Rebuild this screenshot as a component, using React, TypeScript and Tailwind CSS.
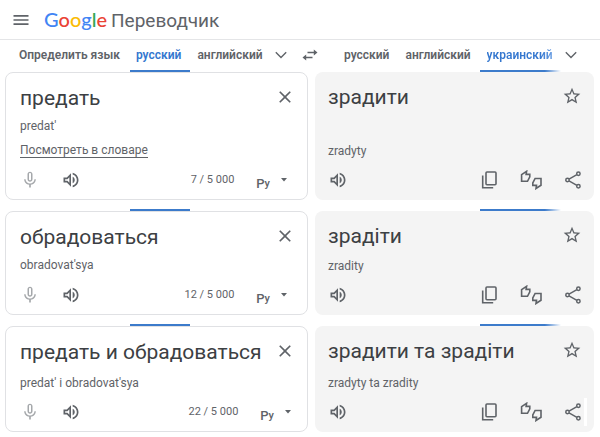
import { useState } from "react";

const PAIRS = [
  {
    source: "предать",
    sourceLatin: "predat'",
    target: "зрадити",
    targetLatin: "zradyty",
    count: 7,
    dictionary: true,
    height: "min-h-32",
  },
  {
    source: "обрадоваться",
    sourceLatin: "obradovat'sya",
    target: "зрадіти",
    targetLatin: "zradity",
    count: 12,
    height: "min-h-26",
  },
  {
    source: "предать и обрадоваться",
    sourceLatin: "predat' i obradovat'sya",
    target: "зрадити та зрадіти",
    targetLatin: "zradyty ta zradity",
    count: 22,
    scroll: true,
    height: "min-h-[106px]",
  },
];

type Pair = (typeof PAIRS)[number];

const ICONS = {
  menu: "M3 18h18v-2H3v2zm0-5h18v-2H3v2zm0-7v2h18V6H3z",
  close:
    "M19 6.41L17.59 5 12 10.59 6.41 5 5 6.41 10.59 12 5 17.59 6.41 19 12 13.41 17.59 19 19 17.59 13.41 12z",
  mic: "M12 14c1.66 0 3-1.34 3-3V5c0-1.66-1.34-3-3-3S9 3.34 9 5v6c0 1.66 1.34 3 3 3zm-1.200-9.100c0-.66.54-1.200 1.200-1.200s1.200.54 1.200 1.200v6.200c0 .66-.53 1.200-1.200 1.200s-1.200-.54-1.200-1.200V4.900zM17.300 11c0 3-2.540 5.100-5.300 5.100S6.700 14 6.700 11H5c0 3.410 2.720 6.230 6 6.720V21h2v-3.280c3.280-.49 6-3.310 6-6.720h-1.700z",
  volume:
    "M3 9v6h4l5 5V4L7 9H3zm7-.17v6.340L7.830 13H5v-2h2.830L10 8.830zM16.500 12c0-1.770-1.020-3.290-2.500-4.030v8.050c1.480-.73 2.500-2.250 2.500-4.020zM14 3.230v2.060c2.890.86 5 3.540 5 6.710s-2.110 5.850-5 6.710v2.060c4.010-.91 7-4.490 7-8.770s-2.990-7.860-7-8.770z",
  star: "M22 9.240l-7.190-.62L12 2 9.190 8.630 2 9.240l5.460 4.730L5.820 21 12 17.270 18.180 21l-1.630-7.030L22 9.240zM12 15.400l-3.760 2.270 1-4.280-3.320-2.880 4.380-.38L12 6.100l1.710 4.040 4.380.38-3.320 2.880 1 4.280L12 15.400z",
};

function Icon({ name, className = "size-5" }: { name: keyof typeof ICONS; className?: string }) {
  return (
    <svg viewBox="0 0 24 24" fill="currentColor" className={className} aria-hidden="true">
      <path d={ICONS[name]} />
    </svg>
  );
}

function CopyIcon() {
  return (
    <svg viewBox="0 0 20 20" fill="none" stroke="currentColor" strokeWidth="1.600" className="size-5" aria-hidden="true">
      <rect x="7" y="2" width="10" height="12.800" rx="1" />
      <path d="M3.700 5.500v12.300h10.500" />
    </svg>
  );
}

function RateIcon() {
  const thumb = "M2.600 4.600v6.700h5.900l2.300-4.500V4.400H7.100l.5-3.100z";
  return (
    <svg viewBox="0 0 24 20" fill="none" stroke="currentColor" strokeWidth="1.600" className="h-5 w-6" aria-hidden="true">
      <path d={thumb} />
      <path d={thumb} transform="rotate(180 12.300 9.900)" />
    </svg>
  );
}

function ShareIcon() {
  return (
    <svg viewBox="0 0 20 20" fill="none" stroke="currentColor" strokeWidth="1.500" className="size-5" aria-hidden="true">
      <circle cx="4.500" cy="10" r="1.700" />
      <circle cx="15.400" cy="3.800" r="1.700" />
      <circle cx="15.400" cy="16.200" r="1.700" />
      <path d="M6 9.100l7.900-4.400M6 10.900l7.900 4.400" />
    </svg>
  );
}

function Chevron() {
  return (
    <svg viewBox="0 0 12 8" fill="none" stroke="currentColor" strokeWidth="1.400" className="h-2 w-3" aria-hidden="true">
      <path d="M.8 1.300L6 6.500l5.200-5.200" />
    </svg>
  );
}

function SwapIcon() {
  return (
    <svg viewBox="0 0 16 12" className="h-3 w-4" aria-hidden="true">
      <path d="M5.500 3.500h7M10.500 8.500h-7" fill="none" stroke="currentColor" strokeWidth="1.600" />
      <path d="M11.800 .5l3.700 3-3.700 3zM4.200 5.500L.5 8.500l3.700 3z" fill="currentColor" />
    </svg>
  );
}

function Header() {
  return (
    <header className="flex h-10 items-center border-b border-[#e4e5e7] px-[11px] text-[#5f6368]">
      <button type="button" aria-label="Меню">
        <Icon name="menu" />
      </button>
      <a href="#" className="ml-[13px] flex items-baseline gap-1">
        <span className="font-['Lato',sans-serif] text-[20px] font-medium leading-7">
          <span className="text-[#4285f4]">G</span>
          <span className="text-[#ea4335]">o</span>
          <span className="text-[#fbbc05]">o</span>
          <span className="text-[#4285f4]">g</span>
          <span className="text-[#34a853]">l</span>
          <span className="text-[#ea4335]">e</span>
        </span>
        <span className="text-[19px] leading-7">Переводчик</span>
      </a>
    </header>
  );
}

function Languages() {
  return (
    <nav className="grid h-[30px] grid-cols-[minmax(0,303fr)_minmax(0,279fr)] items-center gap-[7px] pl-[5px] pr-[6px] text-xs font-semibold text-[#5f6368]">
      <div className="flex items-center pl-[14px]">
        <button type="button">Определить язык</button>
        <button type="button" className="ml-4 text-[#3477cf]">русский</button>
        <button type="button" className="ml-4">английский</button>
        <button type="button" aria-label="Другие языки" className="ml-3">
          <Chevron />
        </button>
        <button type="button" aria-label="Поменять языки" className="-mr-2.5 ml-auto">
          <SwapIcon />
        </button>
      </div>
      <div className="flex items-center pl-[29px]">
        <button type="button">русский</button>
        <button type="button" className="ml-4">английский</button>
        <button type="button" className="ml-4 bg-linear-to-r from-[#3477cf] from-80% to-[#6fa2e4] bg-clip-text text-transparent">
          украинский
        </button>
        <button type="button" aria-label="Другие языки" className="ml-3">
          <Chevron />
        </button>
      </div>
    </nav>
  );
}

function SourceCard({ pair }: { pair: Pair }) {
  const [text, setText] = useState(pair.source);

  return (
    <div className="flex min-w-0 flex-col rounded-lg border border-[#e0e1e4] bg-white pb-[9px] pl-[14px] pt-3">
      <div className="flex items-start pr-3">
        <input
          aria-label="Исходный текст"
          value={text}
          onChange={(e) => setText(e.target.value)}
          className="h-7 min-w-0 flex-1 text-[21px] text-[#3c4043] outline-none"
        />
        <button type="button" aria-label="Очистить" className="pt-0.5" onClick={() => setText("")}>
          <Icon name="close" />
        </button>
      </div>
      <p className={pair.scroll ? "mt-2 text-xs leading-4" : "mt-[5px] text-xs leading-4"}>{pair.sourceLatin}</p>
      {pair.dictionary && (
        <a href="#" className="mt-[9px] self-start border-b border-[#5f6368] text-xs leading-[14px]">
          Посмотреть в словаре
        </a>
      )}
      <div className={pair.scroll ? "mt-auto flex items-center pr-[15px]" : "mt-auto flex items-center pr-[19px]"}>
        <button type="button" aria-label="Голосовой ввод" className="text-[#a5a8ab]">
          <Icon name="mic" />
        </button>
        <button type="button" aria-label="Прослушать" className="ml-[21px]">
          <Icon name="volume" />
        </button>
        <span className="ml-auto text-[11px]">{pair.count} / 5 000</span>
        <button type="button" aria-label="Экранная клавиатура" className="ml-[22px] flex h-5 items-end leading-3">
          <span className="text-[13px] font-medium">Р</span>
          <span className="text-[11px] font-medium">у</span>
        </button>
        <button type="button" aria-label="Способы ввода" className="ml-2.5">
          <svg viewBox="0 0 8 4" fill="currentColor" className="h-1 w-2" aria-hidden="true">
            <path d="M1 0h6L4 3.500z" />
          </svg>
        </button>
      </div>
    </div>
  );
}

function TargetCard({ pair }: { pair: Pair }) {
  const gap = pair.dictionary ? "mt-8" : pair.scroll ? "mt-2.5" : "mt-2";

  return (
    <div className="flex min-w-0 flex-col rounded-lg bg-[#f4f4f4] pb-[10px] pl-[13px] pt-[11px]">
      <div className="flex items-start justify-between pr-3">
        <h2 className="text-[21px] leading-7 text-[#3c4043]">{pair.target}</h2>
        <button type="button" aria-label="Сохранить" className="pt-[3px]">
          <Icon name="star" className="size-5" />
        </button>
      </div>
      <p className={`text-xs leading-4 ${gap}`}>{pair.targetLatin}</p>
      <div className="mt-auto flex items-center pr-[11px]">
        <button type="button" aria-label="Прослушать">
          <Icon name="volume" />
        </button>
        <button type="button" aria-label="Скопировать" className="ml-auto">
          <CopyIcon />
        </button>
        <button type="button" aria-label="Оценить перевод" className="ml-5">
          <RateIcon />
        </button>
        <button type="button" aria-label="Поделиться" className="ml-5">
          <ShareIcon />
        </button>
        {pair.scroll && <span className="-my-1 -mr-1 ml-px h-7 w-[3px] bg-white" />}
      </div>
    </div>
  );
}

export default function App() {
  return (
    <div className="min-h-screen bg-white font-['Roboto',sans-serif] text-[#5f6368]">
      <Header />
      <Languages />
      <main className="flex flex-col gap-[9px]">
        {PAIRS.map((pair) => (
          <section
            key={pair.source}
            className="grid grid-cols-[minmax(0,303fr)_minmax(0,279fr)] gap-x-[7px] pl-[5px] pr-[6px]"
          >
            <div className="ml-[125px] h-0.5 w-[60px] bg-[#3c7bcb]" />
            <div className="ml-[165px] h-0.5 w-[81px] bg-linear-to-r from-[#3c7bcb] from-80% to-transparent" />
            <div className={`grid grid-cols-1 ${pair.height}`}>
              <SourceCard pair={pair} />
            </div>
            <div className={`grid grid-cols-1 ${pair.height}`}>
              <TargetCard pair={pair} />
            </div>
          </section>
        ))}
      </main>
    </div>
  );
}
